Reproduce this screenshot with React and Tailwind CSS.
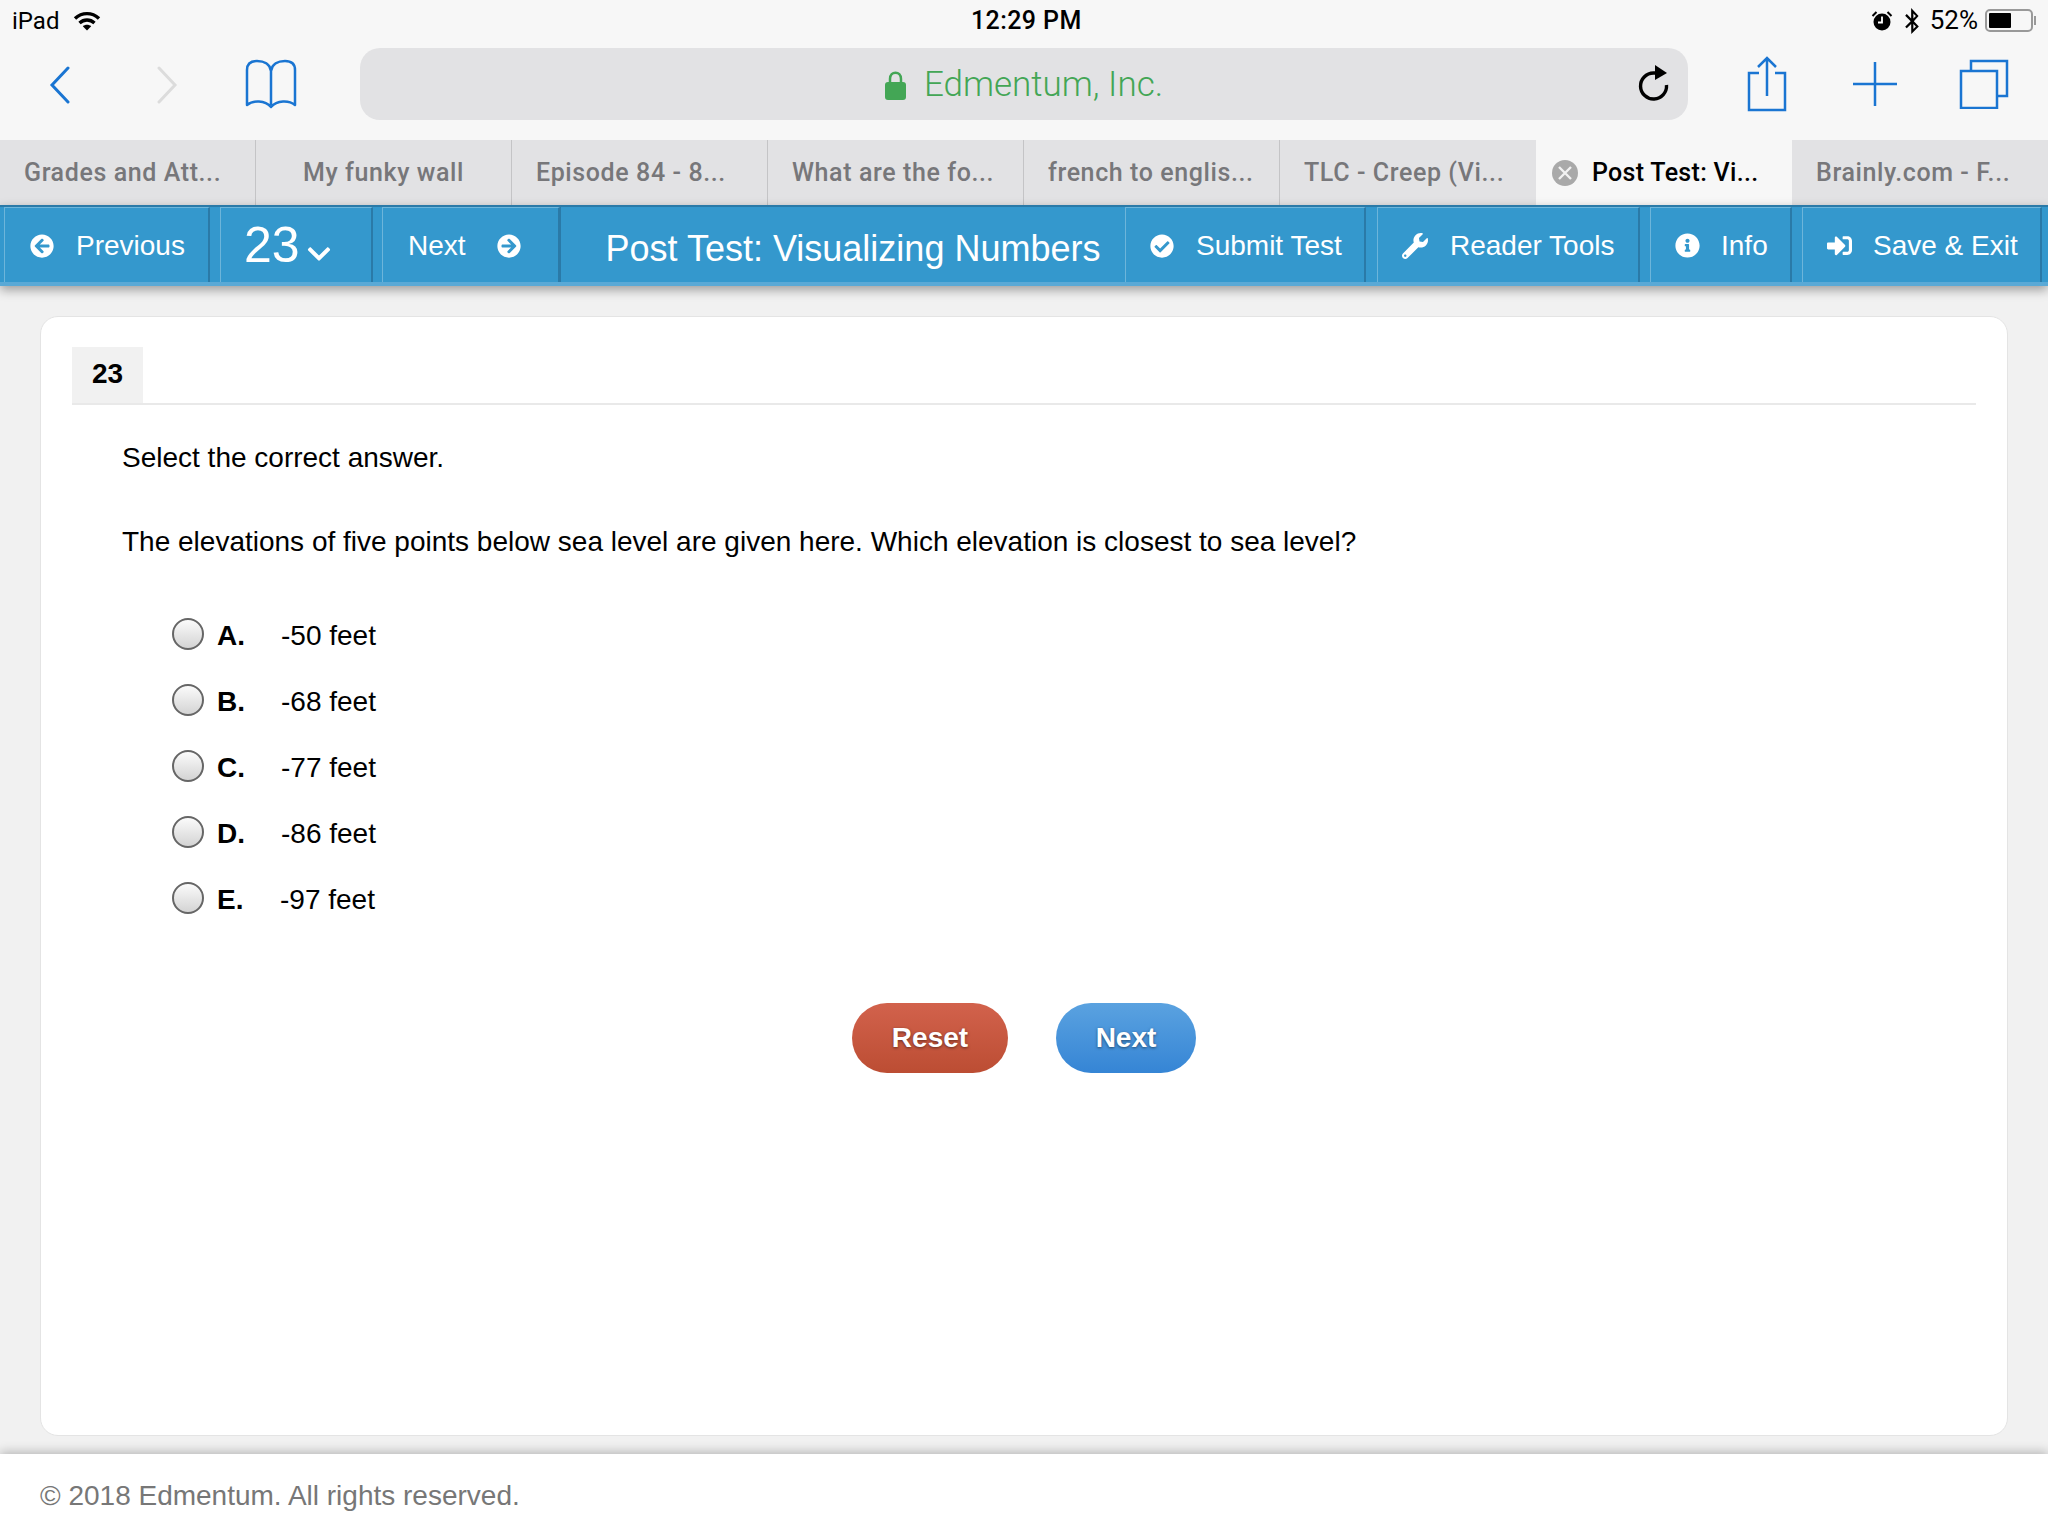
import React from 'react';
import { FaArrowCircleLeft, FaArrowCircleRight, FaCheckCircle, FaWrench, FaInfoCircle, FaSignInAlt, FaChevronDown, FaBluetoothB } from 'react-icons/fa';

const tabs = ['Grades and Att...', 'My funky wall', 'Episode 84 - 8...', 'What are the fo...', 'french to englis...', 'TLC - Creep (Vi...', 'Post Test: Vi...', 'Brainly.com - F...'];

const answers = [
  ['A.', '-50 feet'],
  ['B.', '-68 feet'],
  ['C.', '-77 feet'],
  ['D.', '-86 feet'],
  ['E.', '-97 feet'],
];

const Wifi = () => (
  <svg width="28" height="20" viewBox="0 0 28 20" fill="none" stroke="#000" strokeWidth="3.4">
    <path d="M2 7.500C9 1 19 1 26 7.500" />
    <path d="M6.500 12C11 8 17 8 21.500 12" />
    <path d="M14 19.500L9.800 15.200C12 13.200 16 13.200 18.200 15.200Z" fill="#000" stroke="none" />
  </svg>
);

const Alarm = () => (
  <svg width="22" height="22" viewBox="0 0 22 22">
    <circle cx="11" cy="12" r="8.500" fill="#000" />
    <path d="M11 6.500V12.500H7" stroke="#fff" strokeWidth="1.800" fill="none" />
    <path d="M1.500 6L5.500 2M20.500 6L16.500 2" stroke="#000" strokeWidth="2" />
  </svg>
);

const Seg = ({ className, children }) => (
  <div className={`flex items-center h-full shrink-0 pt-[1px] border-l border-r-2 border-l-[#6db5da] border-r-[#2a7aa8] border-t border-t-[#6db5da] ${className}`}>
    {children}
  </div>
);

export default function App() {
  return (
    <div className="w-[2048px] h-[1536px] flex flex-col overflow-hidden bg-[#f1f1f1] font-['Liberation_Sans',sans-serif]">
      {/* ipad + safari chrome */}
      <div className="h-[140px] shrink-0 bg-[#f7f7f7] flex flex-col font-['Roboto',sans-serif]">
        <div className="h-[48px] relative flex items-center justify-between pb-[7px] pl-[12px] pr-[12px] text-[24px] text-black">
          <div className="flex items-center gap-[14px]">
            <span>iPad</span>
            <Wifi />
          </div>
          <span className="absolute left-[971px] text-[25px] font-medium tracking-[0.4px]">12:29 PM</span>
          <div className="flex items-center">
            <Alarm />
            <FaBluetoothB className="text-[26px] ml-[6px]" />
            <span className="ml-[5px] mr-[7px] text-[26px]">52%</span>
            <div className="w-[48px] h-[23px] rounded-[5px] border-2 border-[#999] p-[2px]">
              <div className="w-[22px] h-full bg-black rounded-[1px]" />
            </div>
            <div className="w-[2px] h-[9px] bg-[#999] ml-[1px]" />
          </div>
        </div>
        <div className="flex items-center h-[72px] mt-0">
          <svg className="ml-[49px] mt-[2px] shrink-0" width="22" height="38" viewBox="0 0 22 38" fill="none" stroke="#1a75d2" strokeWidth="3" strokeLinecap="round">
            <path d="M19 2L3 19L19 36" />
          </svg>
          <svg className="ml-[85px] mt-[2px] shrink-0" width="22" height="38" viewBox="0 0 22 38" fill="none" stroke="#dcdcdc" strokeWidth="3" strokeLinecap="round">
            <path d="M3 2L19 19L3 36" />
          </svg>
          <svg className="ml-[67px] shrink-0" width="52" height="50" viewBox="0 0 52 50" fill="none" stroke="#1a75d2" strokeWidth="2.500" strokeLinejoin="round">
            <path d="M26 12C25 5 19 2 12 2C6 2 2 5 2 11V46C8 41 20 41 26 48C32 41 44 41 50 46V11C50 5 46 2 40 2C33 2 27 5 26 12V46" />
          </svg>
          <div className="ml-[63px] w-[1328px] h-[72px] rounded-[20px] bg-[#e2e2e4] flex items-center relative shrink-0">
            <div className="flex items-center mx-auto pt-[2px] text-[35px] font-light text-[#43a655]">
              <svg width="21" height="29" viewBox="0 0 21 29" fill="none">
                <path d="M5 13V8C5 -0.500 16 -0.500 16 8V13" stroke="#43a655" strokeWidth="2.500" />
                <rect x="0" y="11" width="21" height="18" rx="3" fill="#43a655" />
              </svg>
              <span className="ml-[18px]">Edmentum, Inc.</span>
            </div>
            <svg className="absolute right-[16px]" width="34" height="38" viewBox="0 0 34 38" fill="none">
              <path d="M28.500 20A13 13 0 1 1 15.500 8H20" stroke="#000" strokeWidth="3.400" />
              <path d="M17 0L29 8L17 15Z" fill="#000" />
            </svg>
          </div>
          <svg className="ml-[59px] shrink-0" width="40" height="56" viewBox="0 0 40 56" fill="none" stroke="#1a75d2" strokeWidth="2.500">
            <path d="M12 17H2V54H38V17H28" />
            <path d="M20 40V2M11 11L20 2L29 11" />
          </svg>
          <svg className="ml-[66px] shrink-0" width="44" height="44" viewBox="0 0 44 44" fill="none" stroke="#1a75d2" strokeWidth="2.500">
            <path d="M22 0V44M0 22H44" />
          </svg>
          <svg className="ml-[62px] shrink-0" width="50" height="50" viewBox="0 0 50 50" fill="none" stroke="#1a75d2" strokeWidth="2.500">
            <path d="M12 12V2H48V37H38" />
            <rect x="2" y="12" width="36" height="37" />
          </svg>
        </div>
        <div className="flex-1" />
      </div>

      {/* tab strip */}
      <div className="h-[65px] shrink-0 flex bg-[#e2e2e4] font-['Roboto',sans-serif] text-[25px] font-medium tracking-[0.6px] text-[#77777a]">
        {tabs.map((tab, i) =>
          i === 6 ? (
            <div key={tab} className="w-[256px] bg-[#f7f7f7] text-black tracking-[0.3px] flex items-center relative pl-[56px]">
              <div className="absolute left-[16px] w-[26px] h-[26px] rounded-full bg-[#a9a9a9] flex items-center justify-center">
                <svg width="14" height="14" viewBox="0 0 14 14" stroke="#f2f2f2" strokeWidth="2.400"><path d="M1 1L13 13M13 1L1 13" /></svg>
              </div>
              <span>{tab}</span>
            </div>
          ) : (
            <div key={tab} className={`w-[256px] flex items-center ${i === 1 ? 'justify-center' : 'pl-[24px]'} ${i < 5 ? 'border-r border-[#c4c4c6]' : ''}`}>
              {tab}
            </div>
          )
        )}
      </div>

      {/* test nav */}
      <div className="h-[81px] shrink-0 relative z-10 bg-[#3498cd] border-t-2 border-t-[#2a7aa8] border-b-[4px] border-b-[#5aa9d6] shadow-[0_4px_10px_rgba(0,0,0,0.35)] flex items-center text-white font-['Liberation_Sans',sans-serif] text-[28px]">
        <Seg className="ml-[4px] w-[206px]">
          <FaArrowCircleLeft className="ml-[25px] text-[24px]" />
          <span className="ml-[22px]">Previous</span>
        </Seg>
        <Seg className="ml-[10px] w-[153px]">
          <span className="ml-[23px] text-[50px]">23</span>
          <FaChevronDown className="ml-[6px] mt-[16px] text-[26px]" />
        </Seg>
        <Seg className="ml-[9px] w-[178px] border-r-0">
          <span className="ml-[25px]">Next</span>
          <FaArrowCircleRight className="ml-[31px] text-[24px]" />
        </Seg>
        <div className="flex-1 h-full flex items-center justify-center border-l border-l-[#2a7aa8] text-[36px] pt-[8px] pl-[20px]">
          Post Test: Visualizing Numbers
        </div>
        <Seg className="w-[241px]">
          <FaCheckCircle className="ml-[24px] text-[24px]" />
          <span className="ml-[22px]">Submit Test</span>
        </Seg>
        <Seg className="ml-[11px] w-[263px]">
          <FaWrench className="ml-[24px] text-[26px]" />
          <span className="ml-[22px]">Reader Tools</span>
        </Seg>
        <Seg className="ml-[10px] w-[142px]">
          <FaInfoCircle className="ml-[24px] text-[25px]" />
          <span className="ml-[21px]">Info</span>
        </Seg>
        <Seg className="ml-[10px] w-[240px] mr-[6px]">
          <FaSignInAlt className="ml-[24px] text-[25px]" />
          <span className="ml-[21px]">Save &amp; Exit</span>
        </Seg>
      </div>

      {/* question card */}
      <div className="flex-1 min-h-0 px-[40px] pt-[30px] pb-[18px]">
        <div className="h-full bg-white rounded-[18px] border border-[#e4e4e4] px-[31px] pt-[30px]">
          <div className="border-b-2 border-[#e9e9e9] h-[58px]">
            <div className="w-[71px] h-full bg-[#f1f1f1] flex items-center justify-center pb-[2px] text-[28px] font-bold text-black">23</div>
          </div>
          <div className="pl-[50px] text-[28px] text-black">
            <p className="mt-[37px] leading-[32px]">Select the correct answer.</p>
            <p className="mt-[52px] leading-[32px]">The elevations of five points below sea level are given here. Which elevation is closest to sea level?</p>
            <div className="mt-[60px] pl-[50px] flex flex-col gap-[34px]">
              {answers.map(([letter, value]) => (
                <div key={letter} className="flex items-center h-[32px]">
                  <div className="w-[32px] h-[32px] rounded-full border-2 border-[#666] bg-gradient-to-b from-[#fbfbfb] to-[#d4d4d4]" />
                  <b className="ml-[13px] mt-[3px] w-[64px]">{letter}</b>
                  <span className={`mt-[3px] ${letter === 'E.' ? '-ml-[1px]' : ''}`}>{value}</span>
                </div>
              ))}
            </div>
            <div className="mt-[89px] flex justify-center gap-[48px] pr-[50px]">
              <button className="w-[156px] h-[70px] rounded-full bg-gradient-to-b from-[#d2624c] to-[#bc4d33] text-white font-bold text-[28px] [text-shadow:0_1px_3px_rgba(0,0,0,0.5)]">Reset</button>
              <button className="w-[140px] h-[70px] rounded-full bg-gradient-to-b from-[#5aa2e0] to-[#3585d5] text-white font-bold text-[28px] [text-shadow:0_1px_3px_rgba(0,0,0,0.5)]">Next</button>
            </div>
          </div>
        </div>
      </div>

      {/* footer */}
      <div className="h-[82px] shrink-0 bg-white shadow-[0_-2px_10px_rgba(0,0,0,0.25)] flex items-center pl-[40px] pt-[1px] text-[28px] text-[#777]">
        © 2018 Edmentum. All rights reserved.
      </div>
    </div>
  );
}
